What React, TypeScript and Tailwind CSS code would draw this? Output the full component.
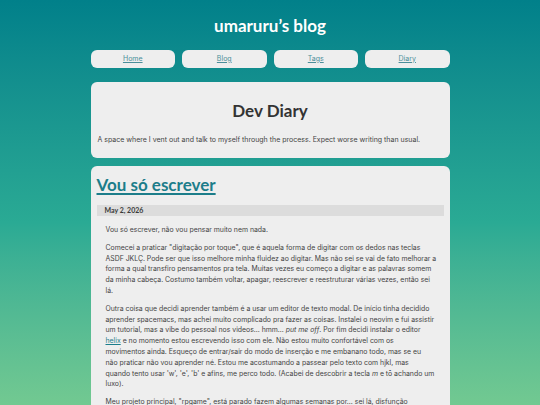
import React from 'react';

const links = ['Home', 'Blog', 'Tags', 'Diary'];

const heading = { fontFamily: 'Lato, "Noto Sans", sans-serif' };

export default function App() {
  return (
    <div
      className="h-screen overflow-hidden bg-gradient-to-b from-[#01808a] via-[#2aaa94] via-55% to-[#72c991] text-[#3a3a3a]"
      style={{ fontFamily: 'Inter, "Noto Sans", sans-serif' }}
    >
      <div className="mx-auto w-[359px] pt-[13px]">
        <h1 className="text-center text-[17px] font-bold leading-[26px] text-white" style={heading}>
          umaruru’s blog
        </h1>

        {/* Nav */}
        <nav className="mt-[11px] grid grid-cols-4 gap-[7px]">
          {links.map((l) => (
            <a
              key={l}
              href="#"
              className="flex h-[18px] items-center justify-center rounded-[6px] bg-[#eeeeee] text-[7px] text-[#4b8e9a] underline"
            >
              {l}
            </a>
          ))}
        </nav>

        {/* Intro card */}
        <section className="mt-[14px] rounded-[6px] bg-[#eeeeee] px-[7px] pt-[17px] pb-[13px]">
          <h2 className="text-center text-[17px] font-bold leading-[24px] text-[#333333]" style={heading}>
            Dev Diary
          </h2>
          <p className="mt-[12px] text-[7px] leading-[10px] text-[#444444]">
            A space where I vent out and talk to myself through the process. Expect worse writing than usual.
          </p>
        </section>

        {/* Post */}
        <article className="mt-[8px] rounded-[6px] bg-[#eeeeee] px-[6px] pt-[8px] pb-[20px]">
          <h3 className="text-[17px] font-bold leading-[22px] text-[#1c7d8a] underline decoration-[1.5px] underline-offset-[2px]" style={heading}>
            Vou só escrever
          </h3>
          <div className="mt-[9px] h-[11px] bg-[#dcdcdc] pl-[8px] text-[7px] font-bold leading-[11px] text-[#3a3a3a]" style={heading}>
            May 2, 2026
          </div>
          <div className="flex flex-col gap-[7px] pl-[9px] pr-[4px] pt-[9px] text-[6.9px] leading-[10.8px] text-[#444444]">
            <p>Vou só escrever, não vou pensar muito nem nada.</p>
            <p>
              Comecei a praticar "digitação por toque", que é aquela forma de digitar com os dedos nas teclas<br />
              ASDF JKLÇ. Pode ser que isso melhore minha fluidez ao digitar. Mas não sei se vai de fato melhorar a<br />
              forma a qual transfiro pensamentos pra tela. Muitas vezes eu começo a digitar e as palavras somem<br />
              da minha cabeça. Costumo também voltar, apagar, reescrever e reestruturar várias vezes, então sei<br />
              lá.
            </p>
            <p>
              Outra coisa que decidi aprender também é a usar um editor de texto modal. De início tinha decidido<br />
              aprender spacemacs, mas achei muito complicado pra fazer as coisas. Instalei o neovim e fui assistir<br />
              um tutorial, mas a vibe do pessoal nos videos... hmm... <em>put me off</em>. Por fim decidi instalar o editor<br />
              <a href="#" className="text-[#1c7d8a] underline">helix</a> e no momento estou escrevendo isso com ele. Não estou muito confortável com os<br />
              movimentos ainda. Esqueço de entrar/sair do modo de inserção e me embanano todo, mas se eu<br />
              não praticar não vou aprender né. Estou me acostumando a passear pelo texto com hjkl, mas<br />
              quando tento usar 'w', 'e', 'b' e afins, me perco todo. (Acabei de descobrir a tecla <em>m</em> e tô achando um<br />
              luxo).
            </p>
            <p>
              Meu projeto principal, "rpgame", está parado fazem algumas semanas por... sei lá, disfunção<br />
              executiva? Não sei. Ando cansado, e quando tenho tempo livre não quero pensar em código.
            </p>
          </div>
        </article>
      </div>
    </div>
  );
}
